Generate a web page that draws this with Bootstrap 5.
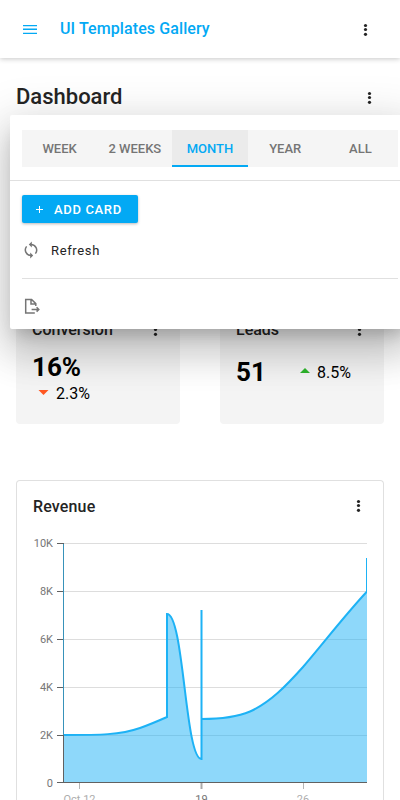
<!DOCTYPE html>
<html lang="en">
<head>
<meta charset="utf-8">
<meta name="viewport" content="width=device-width, initial-scale=1">
<title>UI Templates Gallery</title>
<link href="https://cdn.jsdelivr.net/npm/bootstrap@5.3.0/dist/css/bootstrap.min.css" rel="stylesheet">
<style>
:root { --accent: #03a9f4; --ink: #242424; }
body { font-family: Roboto, sans-serif; color: var(--ink); background: #fff; height: 800px; overflow: hidden; font-size: 16px; line-height: 20px; }
svg { display: block; flex: none; }
.app-bar { height: 58px; padding: 0 25px 0 20px; box-shadow: 0 1px 5px rgba(0,0,0,.22); background: #fff; position: relative; z-index: 2; }
.app-title { color: var(--accent); font-weight: 500; letter-spacing: .1px; margin-left: 20px; }
.page-head { height: 72px; padding: 6px 21px 0 16px; }
.page-head h1 { font-size: 22px; font-weight: 500; line-height: 28px; }
.options-panel { top: 115px; left: 10px; width: 400px; height: 214px; border-radius: 2px; background: #fff; z-index: 5;
  box-shadow: 0 11px 15px -7px rgba(0,0,0,.2), 0 24px 38px 3px rgba(0,0,0,.14), 0 9px 46px 8px rgba(0,0,0,.12); }
.period-tabs { margin: 15px 12px 13px; height: 37px; background: #f5f5f5; }
.period-tabs .nav-link { flex: 1 1 0; padding: 0; height: 37px; line-height: 37px; font-size: 13px; font-weight: 500; color: #757575; text-align: center; white-space: nowrap; border-radius: 0; }
.period-tabs .nav-link.active { background: #ebebeb; color: var(--accent); box-shadow: inset 0 -2px 0 var(--accent); }
.rule { height: 1px; background: #e0e0e0; }
.rule-inset { margin: 18px 12px 0; }
.btn-add { width: 116px; height: 28px; margin: 14px 12px 0; padding: 1px 0 0 13px; gap: 10px; border: 0; border-radius: 2px; background: var(--accent); color: #fff; font-size: 13px; font-weight: 500; letter-spacing: .65px; box-shadow: 0 1px 3px rgba(0,0,0,.28); }
.menu-line { height: 18px; margin: 19px 12px 0; font-size: 13px; letter-spacing: .65px; gap: 11px; }
.menu-line svg { margin-top: -2px; }
.kpi-row { margin: 182px 16px 0; gap: 40px; }
.kpi { flex: 1 1 0; height: 112px; padding: 8px 16px; border-radius: 4px; background: #f4f4f4; }
.kpi-name svg { margin: 0 3px 2px auto; }
.kpi-name, .chart-name { font-weight: 500; }
.kpi-name { height: 20px; }
.kpi-value { font-size: 26px; line-height: 30px; font-weight: 700; color: #000; }
.kpi-delta { color: #000; gap: 7px; }
.kpi-delta svg { margin-bottom: 4px; }
.kpi-stack { padding-top: 12px; }
.kpi-stack .kpi-delta { padding: 2px 0 0 6px; gap: 7px; }
.kpi-inline { padding-top: 17px; }
.kpi-inline .kpi-delta { padding-right: 17px; margin-top: 1px; }
.chart-card { margin: 56px 16px 0; height: 320px; border: 1px solid #e0e0e0; border-bottom: 0; border-radius: 4px 4px 0 0; background: #fff; overflow: hidden; }
.chart-name { letter-spacing: .15px; }
.chart-head { height: 50px; padding: 2px 19px 0 16px; }
.chart-head svg { margin: 0 0 4px auto; }
.ticks text { font-size: 11px; fill: #767676; }
</style>
</head>
<body>
<svg width="0" height="0" class="position-absolute" aria-hidden="true">
  <symbol id="dots" viewBox="0 0 10 14"><circle cx="4.5" cy="3.5" r="1.6"/><circle cx="4.5" cy="7.5" r="1.6"/><circle cx="4.5" cy="12.3" r="1.6"/></symbol>
</svg>

<header class="app-bar d-flex align-items-center">
  <svg width="20" height="20" viewBox="0 0 20 20" fill="#03a9f4"><path d="M3 5.9h14v1.4H3zM3 9.5h14v1.5H3zM3 13.7h14v1.4H3z"/></svg>
  <span class="app-title">UI Templates Gallery</span>
  <svg class="ms-auto me-1" width="10" height="14" fill="#242424"><use href="#dots"/></svg>
</header>

<main>
  <div class="page-head d-flex align-items-center">
    <h1 class="m-0">Dashboard</h1>
    <svg class="ms-auto me-1" width="10" height="14" fill="#242424"><use href="#dots"/></svg>
  </div>

  <section class="kpi-row d-flex">
    <div class="kpi">
      <div class="kpi-name d-flex align-items-center">Conversion<svg width="10" height="14" fill="#242424"><use href="#dots"/></svg></div>
      <div class="kpi-stack">
        <div class="kpi-value">16%</div>
        <div class="kpi-delta d-flex align-items-center"><svg width="11" height="5" viewBox="0 0 11 5"><path d="M.5 0h10L5.5 5z" fill="#ff5722"/></svg>2.3%</div>
      </div>
    </div>
    <div class="kpi">
      <div class="kpi-name d-flex align-items-center">Leads<svg width="10" height="14" fill="#242424"><use href="#dots"/></svg></div>
      <div class="kpi-inline d-flex align-items-center">
        <div class="kpi-value flex-fill">51</div>
        <div class="kpi-delta d-flex align-items-center"><svg width="10" height="5" viewBox="0 0 10 5"><path d="M0 5h10L5 0z" fill="#2eb52c"/></svg>8.5%</div>
      </div>
    </div>
  </section>

  <section class="chart-card">
    <div class="chart-head d-flex align-items-center"><span class="chart-name">Revenue</span><svg width="10" height="14" fill="#242424"><use href="#dots"/></svg></div>
    <svg width="366" height="269" viewBox="17 531 366 269">
      <path d="M64 543.5H367M64 591.5H367M64 639.5H367M64 687.5H367M64 735.5H367" stroke="#ddd" fill="none"/>
      <clipPath id="plot"><rect x="63" y="540" width="304" height="243"/></clipPath>
      <g clip-path="url(#plot)">
        <path fill="#1db2f5" fill-opacity=".5" d="M63 783V735C100 735 120 735 140 728C150 724.5 158 721 167 717V614C184 614 185 759 201.5 759V719C220 719 236 717.5 250 711.5C270 702.5 286 686 303 667C322 645 345 615 367 591.5V783Z"/>
        <path fill="none" stroke="#1db2f5" stroke-width="2" d="M63 735C100 735 120 735 140 728C150 724.5 158 721 167 717V614C184 614 185 759 201.5 759V610V719C220 719 236 717.5 250 711.5C270 702.5 286 686 303 667C322 645 345 615 367 591.5V558"/>
      </g>
      <path d="M57 543.5H64M57 591.5H64M57 639.5H64M57 687.5H64M57 735.5H64M57 782.5H367M63.5 543V783" stroke="#616161" fill="none"/>
      <path d="M63.5 544V735" stroke="#1db2f5" stroke-opacity=".6"/>
      <path d="M79.5 783V789M303.5 783V789" stroke="#b5b5b5"/><path d="M201.5 783V789" stroke="#aaa" stroke-width="2"/>
      <g class="ticks">
        <g text-anchor="end"><text x="53" y="547">10K</text><text x="53" y="595">8K</text><text x="53" y="643">6K</text><text x="53" y="691">4K</text><text x="53" y="739">2K</text><text x="53" y="787">0</text></g>
        <g text-anchor="middle"><text x="79.5" y="803" opacity=".6">Oct 12</text><text x="201.5" y="803">19</text><text x="303" y="803" opacity=".6">26</text></g>
      </g>
    </svg>
  </section>
</main>

<div class="options-panel position-absolute">
  <nav class="period-tabs nav flex-nowrap">
    <a class="nav-link">WEEK</a><a class="nav-link">2 WEEKS</a><a class="nav-link active">MONTH</a><a class="nav-link">YEAR</a><a class="nav-link">ALL</a>
  </nav>
  <div class="rule"></div>
  <button class="btn-add d-flex align-items-center" type="button"><svg width="9" height="9" viewBox="0 0 9 9"><path d="M1 4.5H8M4.5 1V8" stroke="#fff"/></svg><span>ADD CARD</span></button>
  <div class="menu-line d-flex align-items-center">
    <svg width="18" height="18" viewBox="0 0 18 18" fill="none" stroke="#757575" stroke-width="1.5"><path d="M9 3.5A5.6 5.6 0 0 1 13.4 12.6M9 14.5A5.6 5.6 0 0 1 4.6 5.4"/><path d="M9.8 .6V6.4L6.8 3.5ZM8.2 11.6V17.4L11.2 14.5Z" fill="#757575" stroke="none"/></svg>
    <span>Refresh</span>
  </div>
  <div class="rule rule-inset"></div>
  <div class="menu-line d-flex align-items-center">
    <svg width="18" height="18" viewBox="0 0 18 18" fill="none" stroke="#757575" stroke-width="1.5"><path d="M13.8 9V6.6L9.6 2.4H3.7V16H12.8M9 2.6V7.1H13.6M9.6 12.4H16.6M14.6 10.2L16.8 12.4L14.6 14.6"/></svg>
  </div>
</div>
<script src="https://cdn.jsdelivr.net/npm/bootstrap@5.3.0/dist/js/bootstrap.bundle.min.js"></script>
</body>
</html>
